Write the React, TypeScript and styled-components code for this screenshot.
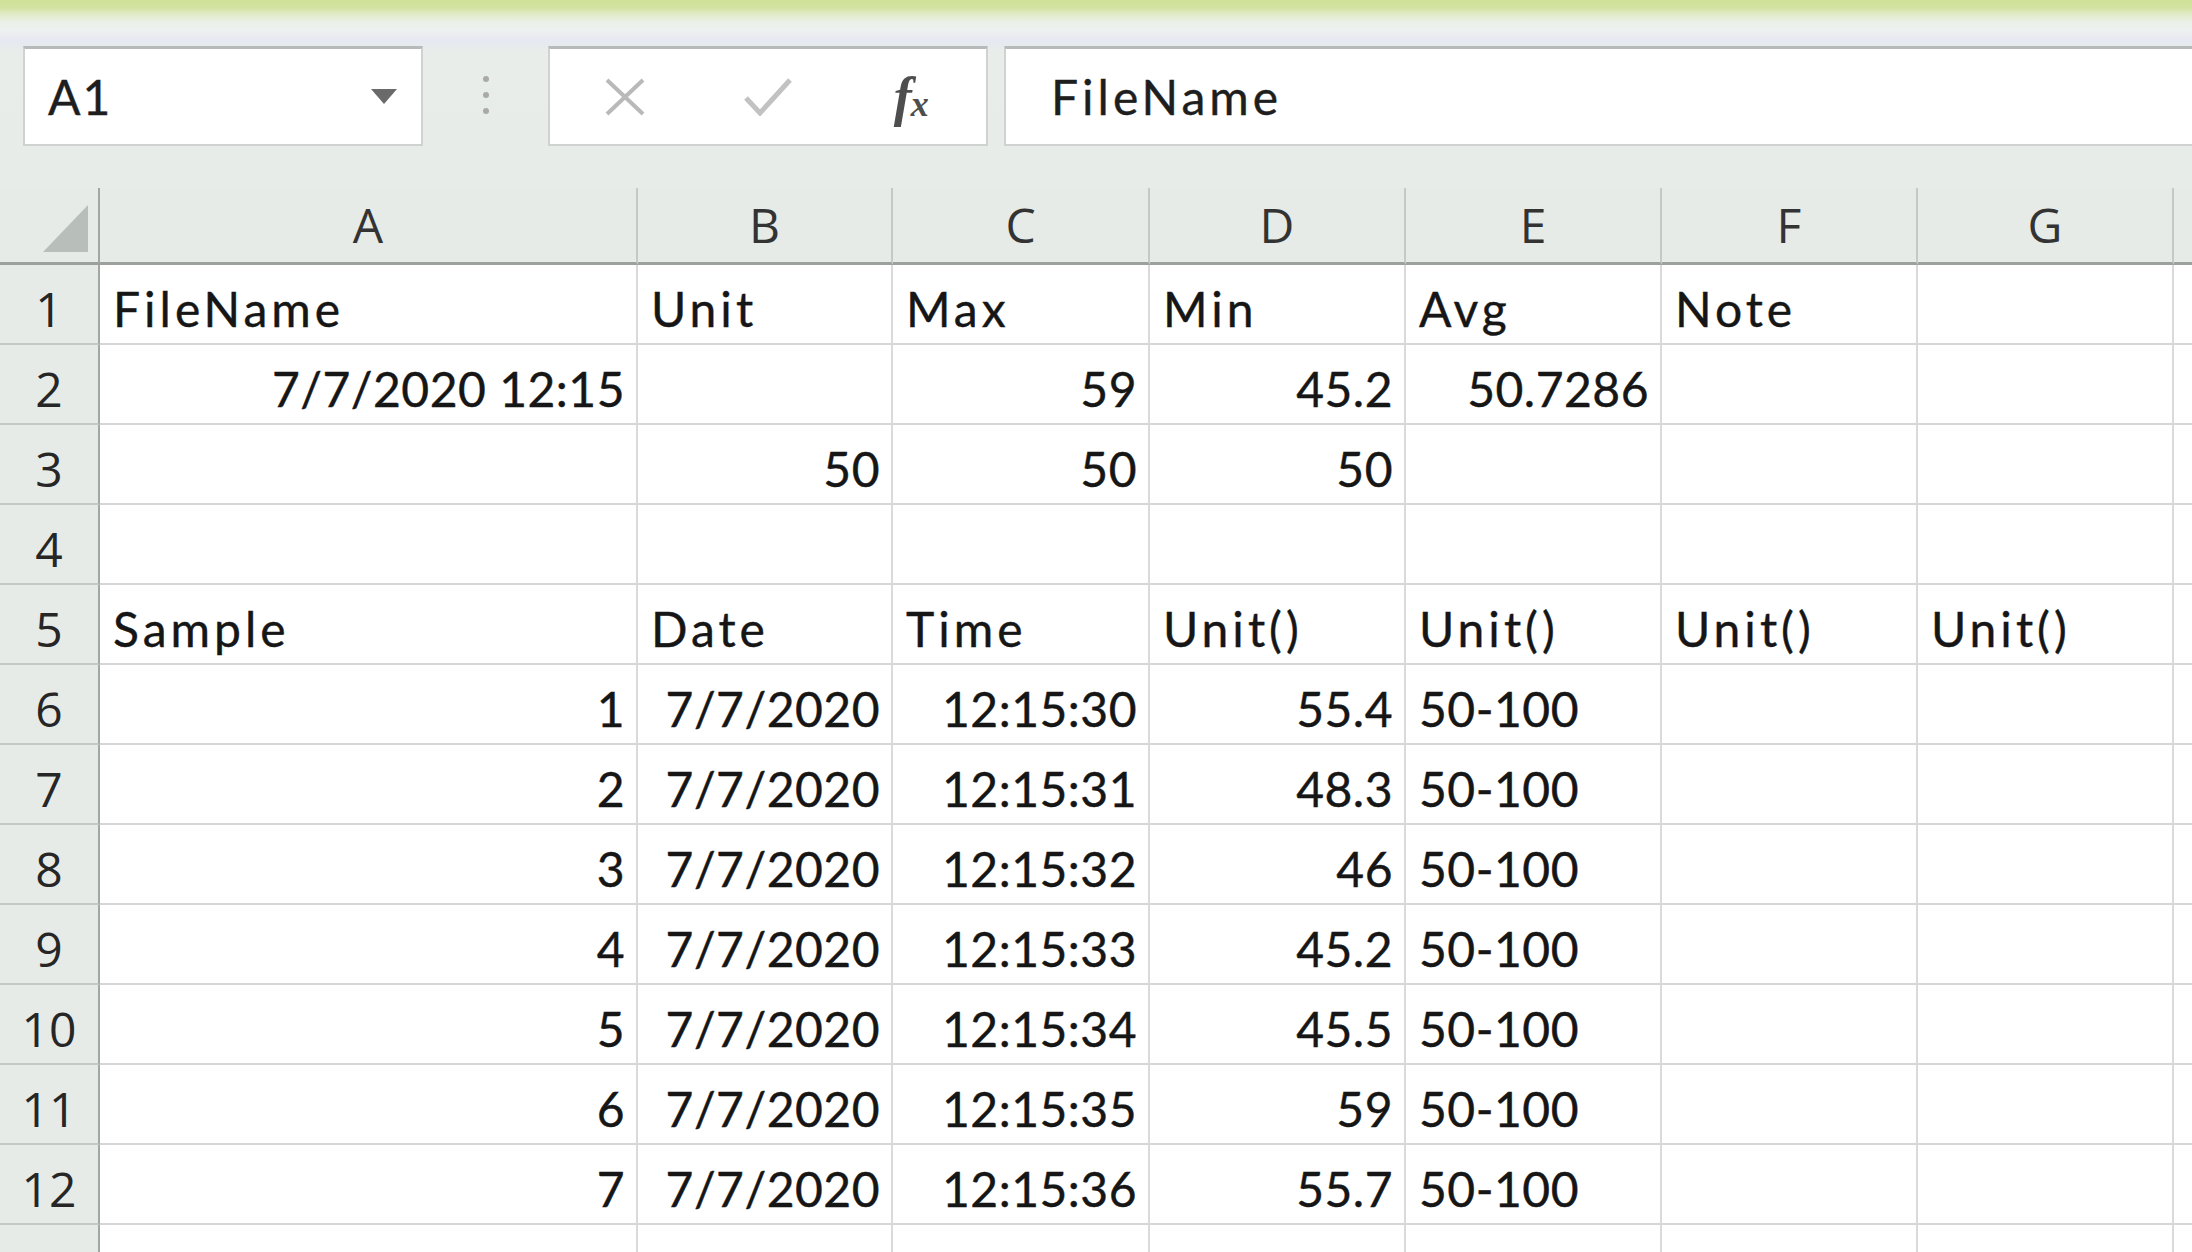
import React from 'react'
import styled, { createGlobalStyle } from 'styled-components'

const GlobalStyle = createGlobalStyle`
  html, body {
    margin: 0;
    padding: 0;
    background: #ffffff;
  }
  body {
    width: 2192px;
    height: 1252px;
    overflow: hidden;
  }
`

const cellFont = `'Lato', 'Liberation Sans', sans-serif`
const headerFont = `'Open Sans', 'Noto Sans', sans-serif`

type Align = 'left' | 'right'
type CellValue = { text: string; align: Align }

const txt = (text: string): CellValue => ({ text, align: 'left' })
const num = (text: string): CellValue => ({ text, align: 'right' })

// words get a looser tracking than figures
const hasLetters = (text?: string) => !!text && /[A-Za-z]/.test(text)

const columns = ['A', 'B', 'C', 'D', 'E', 'F', 'G', '']

const samples: [string, string][] = [
  ['12:15:30', '55.4'],
  ['12:15:31', '48.3'],
  ['12:15:32', '46'],
  ['12:15:33', '45.2'],
  ['12:15:34', '45.5'],
  ['12:15:35', '59'],
  ['12:15:36', '55.7'],
]

const rows: (CellValue | null)[][] = [
  [txt('FileName'), txt('Unit'), txt('Max'), txt('Min'), txt('Avg'), txt('Note')],
  [num('7/7/2020 12:15'), null, num('59'), num('45.2'), num('50.7286')],
  [null, num('50'), num('50'), num('50')],
  [],
  [txt('Sample'), txt('Date'), txt('Time'), txt('Unit()'), txt('Unit()'), txt('Unit()'), txt('Unit()')],
  ...samples.map(([time, value], i) => [
    num(String(i + 1)),
    num('7/7/2020'),
    num(time),
    num(value),
    txt('50-100'),
  ]),
]

const Window = styled.div`
  width: 2192px;
  height: 1252px;
  overflow: hidden;
  display: flex;
  flex-direction: column;
  background: #ffffff;
`

const Toolbar = styled.div`
  height: 188px;
  flex-shrink: 0;
  display: flex;
  align-items: flex-start;
  padding: 46px 0 0 23px;
  box-sizing: border-box;
  background: linear-gradient(
    180deg,
    #cfe197 0px,
    #d3e3a2 8px,
    #e0eac6 14px,
    #ebf0e8 22px,
    #edf1f0 30px,
    #e7e8f2 40px,
    #e8ede9 52px,
    #e7ece9 100%
  );
`

const Field = styled.div`
  height: 100px;
  box-sizing: border-box;
  background: #ffffff;
  border: 2px solid #cfd2d1;
  border-top: 3px solid #b7bab9;
  display: flex;
  align-items: center;
`

const NameBox = styled(Field)`
  width: 400px;
  padding: 0 24px 0 23px;
  justify-content: space-between;
  font-family: ${cellFont};
  font-size: 48px;
  line-height: 1;
  letter-spacing: 2px;
  color: #1e1e1e;
  -webkit-text-stroke: 0.4px #1e1e1e;
`

const Grip = styled.div`
  width: 125px;
  height: 100px;
  display: flex;
  align-items: center;
  justify-content: center;
`

const FormulaButtons = styled(Field)`
  width: 440px;
  padding: 0 4px;
`

const ButtonSlot = styled.div`
  width: 146px;
  height: 100%;
  display: flex;
  align-items: center;
  justify-content: center;
`

const FxLabel = styled.span`
  font-family: 'Liberation Serif', 'DejaVu Serif', serif;
  font-style: italic;
  font-weight: 700;
  font-size: 54px;
  line-height: 1;
  color: #4e4e4e;
  letter-spacing: -1px;
  sub {
    font-size: 36px;
    vertical-align: baseline;
    position: relative;
    top: 1px;
  }
`

const FormulaInput = styled(Field)`
  flex: 1;
  margin-left: 16px;
  padding-left: 45px;
  border-right: none;
  font-family: ${cellFont};
  font-size: 48px;
  line-height: 1;
  letter-spacing: 4px;
  color: #1e1e1e;
  -webkit-text-stroke: 0.4px #1e1e1e;
`

const Sheet = styled.div`
  display: grid;
  grid-template-columns: 100px 538px 255px 257px 256px 256px 256px 256px 1fr;
  grid-template-rows: 77px;
  grid-auto-rows: 80px;
  background: #ffffff;
`

const Corner = styled.div`
  background: #e6ebe8;
  border-right: 2px solid #a2a7a4;
  border-bottom: 3px solid #9ca19e;
  position: relative;
`

const ColumnHeader = styled.div`
  background: #e6ebe8;
  border-right: 2px solid #c4c9c6;
  border-bottom: 3px solid #9ca19e;
  display: flex;
  align-items: center;
  justify-content: center;
  font-family: ${headerFont};
  font-size: 48px;
  line-height: 1;
  color: #333333;
`

const RowHeader = styled.div`
  background: #e6ebe8;
  border-right: 2px solid #a2a7a4;
  border-bottom: 2px solid #c3c8c5;
  display: flex;
  align-items: center;
  justify-content: center;
  padding-top: 9px;
  box-sizing: border-box;
  font-family: ${headerFont};
  font-size: 48px;
  line-height: 1;
  color: #262626;
`

const Cell = styled.div<{ $align: Align; $loose: boolean }>`
  border-right: 2px solid #dadada;
  border-bottom: 2px solid #d6d6d6;
  display: flex;
  align-items: center;
  justify-content: ${(p) => (p.$align === 'right' ? 'flex-end' : 'flex-start')};
  padding: 10px 11px 0 13px;
  box-sizing: border-box;
  min-width: 0;
  white-space: nowrap;
  font-family: ${cellFont};
  font-size: 48px;
  line-height: 1;
  letter-spacing: ${(p) => (p.$loose ? '4px' : '0.5px')};
  color: #161616;
  -webkit-text-stroke: 0.4px #161616;
`

const CornerMark = () => (
  <svg
    width="100"
    height="77"
    viewBox="0 0 100 77"
    style={{ position: 'absolute', left: 0, top: 0 }}
  >
    <polygon points="88,17 88,64 43,64" fill="#b8bfbb" />
  </svg>
)

const DropArrow = () => (
  <svg width="26" height="16" viewBox="0 0 26 16">
    <polygon points="0,0 26,0 13,15" fill="#6a6a6a" />
  </svg>
)

const GripDots = () => (
  <svg width="8" height="42" viewBox="0 0 8 42">
    <circle cx="4" cy="4" r="3" fill="#a9a9a9" />
    <circle cx="4" cy="20" r="3" fill="#a9a9a9" />
    <circle cx="4" cy="36" r="3" fill="#a9a9a9" />
  </svg>
)

const CancelIcon = () => (
  <svg width="42" height="38" viewBox="0 0 42 38">
    <path d="M3 2 L39 36 M39 2 L3 36" stroke="#b9b9b9" strokeWidth="4" fill="none" />
  </svg>
)

const EnterIcon = () => (
  <svg width="48" height="38" viewBox="0 0 48 38">
    <path d="M2 20 L16 35 L46 2" stroke="#c2c2c2" strokeWidth="5" fill="none" />
  </svg>
)

export default function App() {
  return (
    <>
      <GlobalStyle />
      <Window>
        <Toolbar>
          <NameBox>
            <span>A1</span>
            <DropArrow />
          </NameBox>
          <Grip>
            <GripDots />
          </Grip>
          <FormulaButtons>
            <ButtonSlot>
              <CancelIcon />
            </ButtonSlot>
            <ButtonSlot>
              <EnterIcon />
            </ButtonSlot>
            <ButtonSlot>
              <FxLabel>
                f<sub>x</sub>
              </FxLabel>
            </ButtonSlot>
          </FormulaButtons>
          <FormulaInput>FileName</FormulaInput>
        </Toolbar>
        <Sheet>
          <Corner>
            <CornerMark />
          </Corner>
          {columns.map((c, j) => (
            <ColumnHeader key={j}>{c}</ColumnHeader>
          ))}
          {[...rows, []].map((row, i) => (
            <React.Fragment key={i}>
              <RowHeader>{i < rows.length ? i + 1 : ''}</RowHeader>
              {columns.map((_, j) => {
                const value = row[j]
                return (
                  <Cell
                    key={j}
                    $align={value?.align ?? 'left'}
                    $loose={hasLetters(value?.text)}
                  >
                    {value?.text}
                  </Cell>
                )
              })}
            </React.Fragment>
          ))}
        </Sheet>
      </Window>
    </>
  )
}
